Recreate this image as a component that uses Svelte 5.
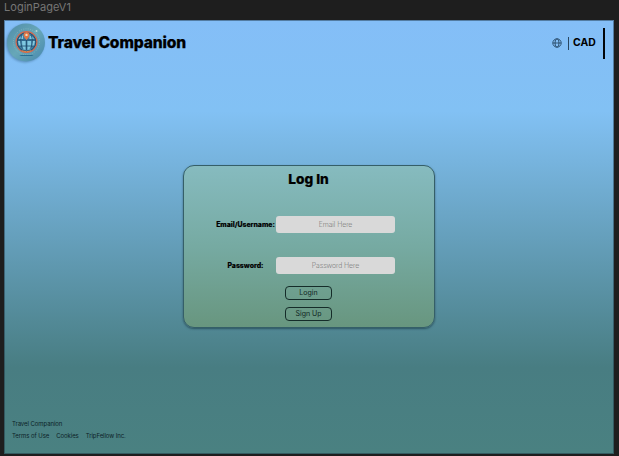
<script>
  const fields = [
    { id: 'email', label: 'Email/Username:', hint: 'Email Here', type: 'text' },
    { id: 'password', label: 'Password:', hint: 'Password Here', type: 'password' }
  ];
  const links = ['Terms of Use', 'Cookies', 'TripFellow Inc.'];
</script>

<div class="canvas">
  <div class="frame-name">LoginPageV1</div>
  <main class="page">
    <header>
      <svg class="logo" width="40" height="40" viewBox="0 0 40 40">
        <defs>
          <linearGradient id="disc" x1="0" y1="0" x2="1" y2="1">
            <stop offset="0" stop-color="#4f8ca8" />
            <stop offset=".5" stop-color="#67a7b8" />
            <stop offset="1" stop-color="#4688ae" />
          </linearGradient>
        </defs>
        <circle cx="20" cy="19.500" r="19" fill="url(#disc)" />
        <circle cx="20.500" cy="18.800" r="13" fill="none" stroke="#9bc8c4" stroke-width=".7" stroke-dasharray="1 1.3" opacity=".75" />
        <circle cx="20.500" cy="19" r="10.400" fill="#3f7ea3" stroke="#d8674b" stroke-width="1.200" />
        <circle cx="20.500" cy="19" r="9.300" fill="none" stroke="#234a69" stroke-width=".9" />
        <path d="M13.500 14.500l3.500-2.500v4h-4zM23.500 12l3.500 2.500 1 1.500h-4.500zM12 18h3v5h-2zM16 18h3.500v9l-3-1zM21.500 18h3.500v8l-3.500 1zM26 18h3l-1 5h-2z" fill="#7fc8e0" />
        <path d="M11 17h19M12.500 23h16M16 12c-2 5-2 9 1 14M25 12c2 5 2 9-1 14M20.500 17v10" fill="none" stroke="#204c6e" stroke-width=".8" />
        <path d="M20.500 17c-2-2.500-3-3.500-3-5a3 3 0 0 1 6 0c0 1.500-1 2.500-3 5z" fill="#df7648" />
        <circle cx="20.500" cy="11.900" r="1.200" fill="#e8dec0" />
        <path d="M16 27.800q4.500 2 9 0" fill="none" stroke="#e98945" stroke-width="1" />
        <ellipse cx="20.500" cy="32.500" rx="7" ry=".6" fill="#286e94" />
        <circle cx="30.500" cy="8" r="1" fill="#b6d7d5" />
      </svg>
      <h1>Travel Companion</h1>
      <div class="tools">
        <svg class="globe" width="10" height="10" viewBox="0 0 10 10" fill="none" stroke="#18364f" stroke-width=".75">
          <circle cx="5" cy="5" r="4.200" />
          <ellipse cx="5" cy="5" rx="2" ry="4.200" />
          <path d="M.8 5h8.400" />
        </svg>
        <span class="thin"></span>
        <span class="currency">CAD</span>
        <span class="thick"></span>
      </div>
    </header>

    <form class="card">
      <h2>Log In</h2>
      {#each fields as field}
        <div class="field">
          <label for={field.id}>{field.label}</label>
          <input id={field.id} type={field.type} placeholder={field.hint} />
        </div>
      {/each}
      <button type="button">Login</button>
      <button type="button">Sign Up</button>
    </form>

    <footer>
      <div>Travel Companion</div>
      <nav>
        {#each links as link}<span>{link}</span>{/each}
      </nav>
    </footer>
  </main>
</div>

<style>
  .canvas {
    box-sizing: border-box;
    width: 619px;
    height: 456px;
    padding: 0 5px 2px 4px;
    display: flex;
    flex-direction: column;
    overflow: hidden;
    background: #1e1e1e;
    font-family: Inter, sans-serif;
    color: #000;
  }
  .frame-name {
    height: 20px;
    flex: none;
    font-size: 11px;
    line-height: 14px;
    letter-spacing: 0.03px;
    color: #767676;
  }
  .page {
    box-sizing: border-box;
    flex: 1;
    min-height: 0;
    display: flex;
    flex-direction: column;
    align-items: center;
    border: 1px solid rgba(24, 45, 58, 0.45);
    background: linear-gradient(#84bef7 0%, #82c1f4 21%, #487d82 80%, #4a8181 100%) border-box;
  }
  header {
    box-sizing: border-box;
    width: 100%;
    height: 44px;
    flex: none;
    display: flex;
    align-items: center;
    padding: 0 8px 0 1px;
  }
  .logo {
    flex: none;
    filter: drop-shadow(-1px 1px 1px rgba(35, 75, 110, 0.4));
  }
  h1 {
    margin: 0 0 0 2px;
    font-size: 15.6px;
    line-height: 20px;
    font-weight: 800;
    letter-spacing: -0.13px;
    -webkit-text-stroke: 0.25px #000;
    white-space: nowrap;
  }
  .tools {
    margin-left: auto;
    display: flex;
    align-items: center;
  }
  .thin {
    width: 1px;
    height: 13px;
    margin: 0 4px 0 6px;
    background: #294660;
  }
  .currency {
    width: 23px;
    font-size: 10.4px;
    line-height: 14px;
    font-weight: 700;
  }
  .thick {
    width: 2px;
    height: 31px;
    margin-left: 7px;
    background: #020508;
  }
  .card {
    box-sizing: border-box;
    width: 252px;
    height: 163px;
    margin: 100px 1px 0 0;
    flex: none;
    display: flex;
    flex-direction: column;
    align-items: center;
    border: 1px solid #355f68;
    border-radius: 11px;
    background: linear-gradient(#86bbbf, #76aaa2 50%, #68967f);
    box-shadow: 0 1px 2px rgba(20, 50, 65, 0.6);
  }
  h2 {
    margin: 4px 0 28px;
    font-size: 13.7px;
    line-height: 18px;
    font-weight: 800;
    -webkit-text-stroke: 0.2px #000;
  }
  .field {
    width: 180px;
    height: 17px;
    flex: none;
    display: flex;
    align-items: center;
    margin: 0 7px 24px 0;
  }
  label {
    width: 61px;
    flex: none;
    text-align: center;
    font-size: 6.9px;
    line-height: 10px;
    font-weight: 800;
    -webkit-text-stroke: 0.15px #000;
    white-space: nowrap;
  }
  input {
    box-sizing: border-box;
    width: 119px;
    height: 17px;
    margin: 0;
    padding: 0;
    border: 0;
    border-radius: 3px;
    background: #d9d9d9;
    text-align: center;
    font: 200 6.9px/17px Inter, sans-serif;
    letter-spacing: -0.05px;
    outline: none;
  }
  input::placeholder {
    color: #555;
    opacity: 1;
  }
  .field:nth-of-type(2) {
    margin-bottom: 12px;
  }
  button {
    box-sizing: border-box;
    width: 47px;
    height: 14px;
    flex: none;
    margin: 0 0 7px;
    padding: 0;
    border: 1px solid #152c29;
    border-radius: 4px;
    background: none;
    font: 400 7px/12px Inter, sans-serif;
    color: #102522;
  }
  footer {
    box-sizing: border-box;
    width: 100%;
    margin-top: auto;
    padding: 0 7px 11px;
    font-size: 6px;
    line-height: 12px;
    letter-spacing: -0.07px;
    color: #0c2227;
  }
  nav {
    display: flex;
    gap: 7px;
  }
</style>
